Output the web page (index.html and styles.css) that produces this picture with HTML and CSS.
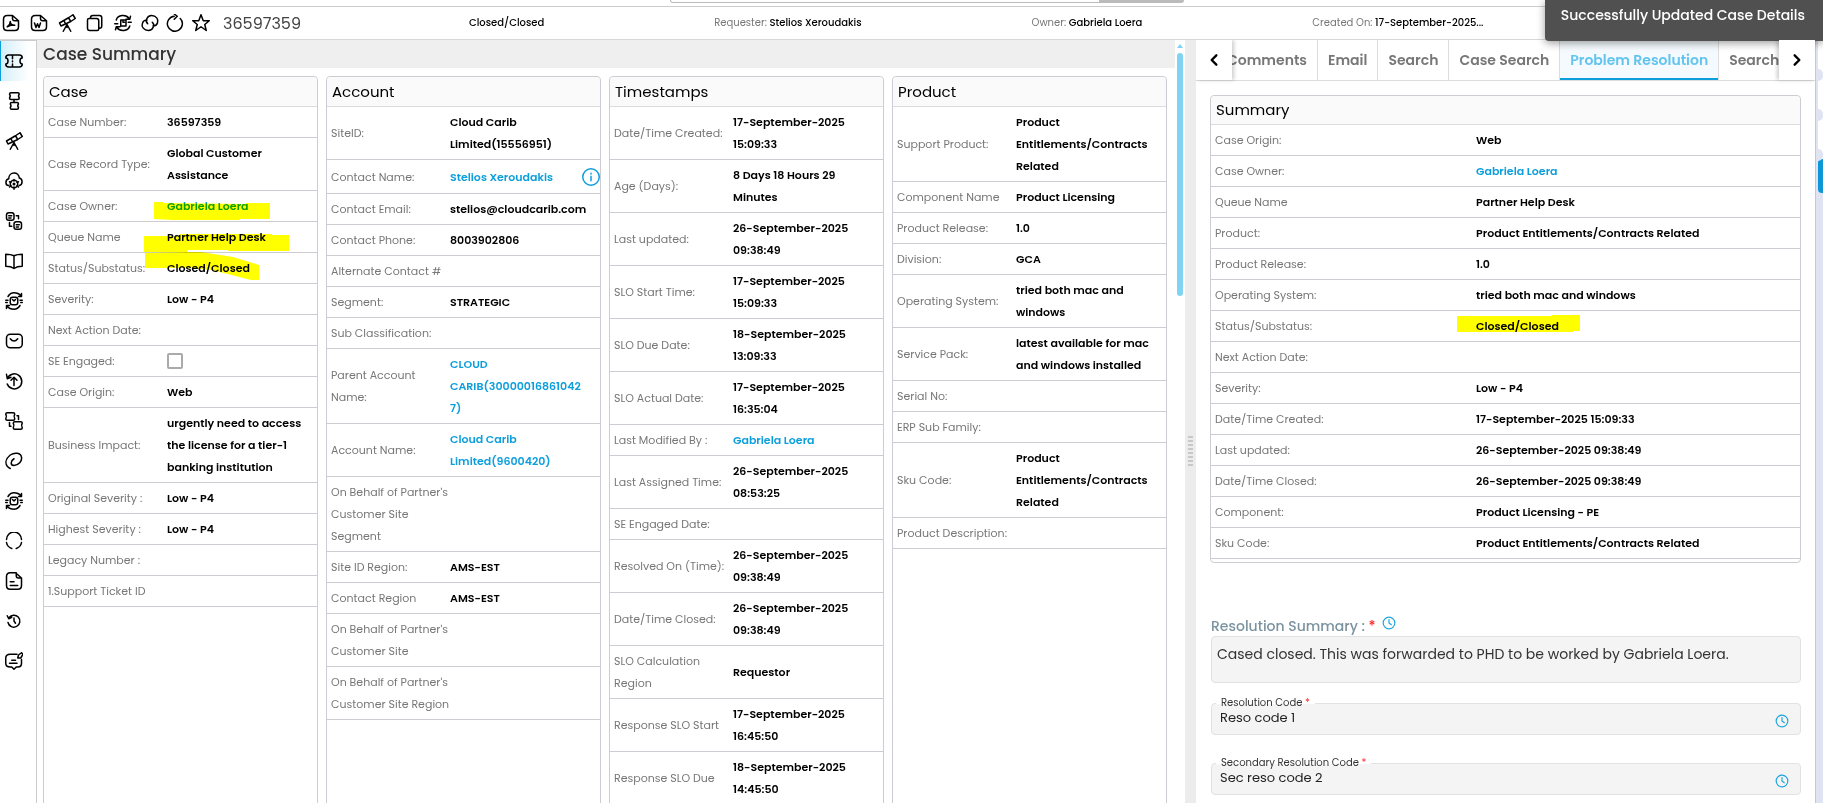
FILE: index.html
```
<!DOCTYPE html>
<html lang="en">
<head>
    <meta charset="UTF-8">
    <meta name="viewport" content="width=device-width, initial-scale=1.0">
    <title>Case 36597359</title>
    <link rel="stylesheet" href="styles.css">
</head>
<body>
    <!-- icon sprite -->
    <svg class="sprite" xmlns="http://www.w3.org/2000/svg">
        <symbol id="i-pdf" viewBox="0 0 24 24"><path d="M14 2H7Q2 2 2 7v10q0 5 5 5h10q5 0 5-5V9zM14 2v4q0 3 3 3h5M7 17q4-2 4-7 0 5 6 5-5-1-10 2"/></symbol>
        <symbol id="i-doc" viewBox="0 0 24 24"><path d="M14 2H7Q2 2 2 7v10q0 5 5 5h10q5 0 5-5V9zM14 2v4q0 3 3 3h5M6 12l2 6 2-5 2 5 2-6"/></symbol>
        <symbol id="i-scope" viewBox="0 0 24 24"><path d="M2 12l12-7 3 5-13 6zM14 5l6-4 3 5-6 4zM8 9l2 4M12 14l-5 9M12 14l5 9M12 14v4"/></symbol>
        <symbol id="i-copy" viewBox="0 0 24 24"><path d="M2 8q0-2 2-2h10q3 0 3 3v11q0 2-2 2H5q-3 0-3-3zM6 5q0-3 3-3h9q3 0 3 3v11q0 3-3 3"/></symbol>
        <symbol id="i-sync" viewBox="0 0 24 24"><path d="M3 8C5 1 16 0 20 6M22 3l-1 4-5 0M21 16C19 23 8 24 4 18M2 21l1-4h5M9 8h7v8H9zM12 8v3h2M1 13h4M19 11h4"/></symbol>
        <symbol id="i-link" viewBox="0 0 24 24"><path d="M9 13c-4-3-1-11 5-11s10 5 8 10c-1 3-4 4-6 4M15 11c4 3 1 11-5 11S0 17 2 12c1-3 4-4 6-4"/></symbol>
        <symbol id="i-reload" viewBox="0 0 24 24"><path d="M11 3a10 10 0 1 0 8 3M11 0l4 3-4 4"/></symbol>
        <symbol id="i-star" viewBox="0 0 24 24"><path d="M12 1l3 8h8l-6 5 2 8-7-5-7 5 2-8-6-5h8z"/></symbol>
        <symbol id="i-ticket" viewBox="0 0 24 24"><path d="M5 4h14q4 0 4 4-3 0-3 4t3 4q0 4-4 4H5q-4 0-4-4 3 0 3-4T1 8q0-4 4-4zM10 5v4M10 12v1M10 16v3"/></symbol>
        <symbol id="i-nodes" viewBox="0 0 24 24"><path d="M8 1h9q2 0 2 2-2 2 0 5 0 2-2 2H8q-2 0-2-2 2-3 0-5 0-2 2-2zM9 14h7q2 0 2 2-2 2 0 5 0 2-2 2H9q-2 0-2-2 2-3 0-5 0-2 2-2zM12 10v4"/></symbol>
        <symbol id="i-cloud" viewBox="0 0 24 24"><path d="M5 18c-5 0-5-8 0-9 0-10 14-10 14-1 5 1 5 9 0 10"/><circle cx="12" cy="16" r="5"/><circle cx="12" cy="16" r="1"/><path d="M12 10v2M12 20v3M6 13l2 1M6 20l2-2M18 13l-2 1M18 20l-2-2"/></symbol>
        <symbol id="i-tree" viewBox="0 0 24 24"><rect x="2" y="1" width="10" height="10" rx="3"/><rect x="12" y="13" width="10" height="10" rx="3"/><path d="M5 5h4M5 8h3M15 17h4M15 20h3M15 5h3v4M6 14v5h3"/></symbol>
        <symbol id="i-book" viewBox="0 0 24 24"><path d="M12 5Q8 3 1 3v16q7 0 11 3 4-3 11-3V3q-7 0-11 2zM12 5v16"/></symbol>
        <symbol id="i-mailsync" viewBox="0 0 24 24"><path d="M4 6Q7 1 12 1q6 0 9 4M22 2v4h-4M20 18q-3 5-8 5-6 0-9-4M2 22v-4h4"/><rect x="7" y="7" width="10" height="10" rx="3"/><path d="M10 10l2 2 2-2M1 11h3M1 14h2M20 11h3M21 14h2"/></symbol>
        <symbol id="i-mail" viewBox="0 0 24 24"><rect x="2" y="3" width="21" height="18" rx="5"/><path d="M7 9q5 6 10 0"/></symbol>
        <symbol id="i-upload" viewBox="0 0 24 24"><path d="M3 9a10 10 0 1 1 0 7M2 3l1 6 5-2M12 18V8M8 11l4-4 4 4"/></symbol>
        <symbol id="i-tickets" viewBox="0 0 24 24"><path d="M3 1h8q2 0 2 2-2 3 0 6 0 2-2 2H3q-2 0-2-2 2-3 0-6 0-2 2-2zM13 13h8q2 0 2 2-2 3 0 6 0 2-2 2h-8q-2 0-2-2 2-3 0-6 0-2 2-2zM16 5h2v5M6 14v5h2"/></symbol>
        <symbol id="i-clip" viewBox="0 0 24 24"><path d="M12 9c-5 3-5 9 0 9 6 0 11-6 10-11C21 1 13 0 7 4 1 9 0 15 3 19q2 2 4 3"/></symbol>
        <symbol id="i-circle" viewBox="0 0 24 24"><path d="M2 10a10 10 0 0 1 20 0M2 14q1 6 7 8M22 14q-1 6-7 8"/></symbol>
        <symbol id="i-note" viewBox="0 0 24 24"><path d="M14 1H7Q2 1 2 6v12q0 5 5 5h10q5 0 5-5V8zM15 1v4q0 3 3 3h4M7 13h5M7 18h10"/></symbol>
        <symbol id="i-history" viewBox="0 0 24 24"><path d="M5 8a8 8 0 1 1-1 6M3 5l2 4 4-2M12 8v4l2 3"/></symbol>
        <symbol id="i-edit" viewBox="0 0 24 24"><path d="M16 3H7Q1 3 1 8v7q0 5 6 5h2l3 3 3-3h2q5 0 5-5v-5M17 8l1-4 4-3 2 2-3 5zM9 11h5M6 15h10"/></symbol>
        <symbol id="i-clock" viewBox="0 0 24 24"><circle cx="12" cy="12" r="10"/><path d="M12 6v6l4 3"/></symbol>
        <symbol id="i-info" viewBox="0 0 24 24"><circle cx="12" cy="12" r="11"/><path d="M12 11v6M12 7v1"/></symbol>
        <symbol id="i-prev" viewBox="0 0 24 24"><path d="M16 4l-8 8 8 8"/></symbol>
        <symbol id="i-next" viewBox="0 0 24 24"><path d="M8 4l8 8-8 8"/></symbol>
    </svg>

    <div class="topbar"><div class="searchbox"><span></span></div></div>

    <header class="casebar">
        <div class="tools">
            <button aria-label="Export PDF"><svg><use href="#i-pdf"/></svg></button>
            <button aria-label="Export Word"><svg><use href="#i-doc"/></svg></button>
            <button aria-label="Explore"><svg><use href="#i-scope"/></svg></button>
            <button aria-label="Copy"><svg><use href="#i-copy"/></svg></button>
            <button aria-label="Sync"><svg><use href="#i-sync"/></svg></button>
            <button class="narrow" aria-label="Link"><svg><use href="#i-link"/></svg></button>
            <button class="narrow" aria-label="Reload"><svg><use href="#i-reload"/></svg></button>
            <button aria-label="Favourite"><svg><use href="#i-star"/></svg></button>
        </div>
        <span class="case-id">36597359</span>
        <div class="meta">
            <span><b>Closed/Closed</b></span>
            <span>Requester: <b>Stelios Xeroudakis</b></span>
            <span>Owner: <b>Gabriela Loera</b></span>
            <span>Created On: <b>17-September-2025...</b></span>
        </div>
    </header>

    <main class="workspace">
        <nav class="rail">
            <button class="active" aria-label="Case"><svg><use href="#i-ticket"/></svg></button>
            <button aria-label="Hierarchy"><svg><use href="#i-nodes"/></svg></button>
            <button aria-label="Explore"><svg><use href="#i-scope"/></svg></button>
            <button aria-label="Cloud"><svg><use href="#i-cloud"/></svg></button>
            <button aria-label="Related"><svg><use href="#i-tree"/></svg></button>
            <button aria-label="Knowledge"><svg><use href="#i-book"/></svg></button>
            <button aria-label="Mail sync"><svg><use href="#i-mailsync"/></svg></button>
            <button aria-label="Mail"><svg><use href="#i-mail"/></svg></button>
            <button aria-label="Escalate"><svg><use href="#i-upload"/></svg></button>
            <button aria-label="Linked cases"><svg><use href="#i-tickets"/></svg></button>
            <button aria-label="Attachments"><svg><use href="#i-clip"/></svg></button>
            <button aria-label="Transfers"><svg><use href="#i-mailsync"/></svg></button>
            <button aria-label="Progress"><svg><use href="#i-circle"/></svg></button>
            <button aria-label="Notes"><svg><use href="#i-note"/></svg></button>
            <button aria-label="History"><svg><use href="#i-history"/></svg></button>
            <button aria-label="Feedback"><svg><use href="#i-edit"/></svg></button>
        </nav>

        <section class="summary-pane">
            <h1>Case Summary</h1>
            <div class="cards">
                <section class="card">
                    <h2>Case</h2>
                    <dl>
                        <div><dt>Case Number:</dt><dd>36597359</dd></div>
                        <div><dt>Case Record Type:</dt><dd>Global Customer Assistance</dd></div>
                        <div><dt>Case Owner:</dt><dd><a href="#">Gabriela Loera</a></dd></div>
                        <div><dt>Queue Name</dt><dd>Partner Help Desk</dd></div>
                        <div><dt>Status/Substatus:</dt><dd>Closed/Closed</dd></div>
                        <div><dt>Severity:</dt><dd>Low - P4</dd></div>
                        <div><dt>Next Action Date:</dt><dd></dd></div>
                        <div><dt><label for="seEngaged">SE Engaged:</label></dt><dd><input type="checkbox" id="seEngaged"></dd></div>
                        <div><dt>Case Origin:</dt><dd>Web</dd></div>
                        <div><dt>Business Impact:</dt><dd>urgently need to access the license for a tier-1 banking institution</dd></div>
                        <div><dt>Original Severity :</dt><dd>Low - P4</dd></div>
                        <div><dt>Highest Severity :</dt><dd>Low - P4</dd></div>
                        <div><dt>Legacy Number :</dt><dd></dd></div>
                        <div><dt>1.Support Ticket ID</dt><dd></dd></div>
                    </dl>
                    <svg class="marker" width="273" height="220">
                        <path d="M110 125h9v1l83 1v-1h24v16h-30v1h-68l-18-1z"/>
                        <path d="M100 159h36v-2h92v1h17v16h-61v-1h-41v2h-43z"/>
                        <path d="M101 176l42-1h14l32 5 26 8v15h-8l-39-10-25-2h-42z"/>
                    </svg>
                </section>

                <section class="card">
                    <h2>Account</h2>
                    <dl>
                        <div><dt>SiteID:</dt><dd>Cloud Carib Limited(15556951)</dd></div>
                        <div class="with-info"><dt>Contact Name:</dt><dd><a href="#">Stelios Xeroudakis</a><button aria-label="Contact details"><svg><use href="#i-info"/></svg></button></dd></div>
                        <div><dt>Contact Email:</dt><dd>stelios@cloudcarib.com</dd></div>
                        <div><dt>Contact Phone:</dt><dd>8003902806</dd></div>
                        <div><dt>Alternate Contact #</dt><dd></dd></div>
                        <div><dt>Segment:</dt><dd>STRATEGIC</dd></div>
                        <div><dt>Sub Classification:</dt><dd></dd></div>
                        <div><dt>Parent Account Name:</dt><dd><a href="#">CLOUD CARIB(30000016861042<wbr>7)</a></dd></div>
                        <div><dt>Account Name:</dt><dd><a href="#">Cloud Carib Limited(9600420)</a></dd></div>
                        <div><dt>On Behalf of Partner's Customer Site<br>Segment</dt><dd></dd></div>
                        <div><dt>Site ID Region:</dt><dd>AMS-EST</dd></div>
                        <div><dt>Contact Region</dt><dd>AMS-EST</dd></div>
                        <div><dt>On Behalf of Partner's Customer Site</dt><dd></dd></div>
                        <div><dt>On Behalf of Partner's Customer Site Region</dt><dd></dd></div>
                    </dl>
                </section>

                <section class="card">
                    <h2>Timestamps</h2>
                    <dl>
                        <div><dt>Date/Time Created:</dt><dd>17-September-2025 15:09:33</dd></div>
                        <div><dt>Age (Days):</dt><dd>8 Days 18 Hours 29 Minutes</dd></div>
                        <div><dt>Last updated:</dt><dd>26-September-2025 09:38:49</dd></div>
                        <div><dt>SLO Start Time:</dt><dd>17-September-2025 15:09:33</dd></div>
                        <div><dt>SLO Due Date:</dt><dd>18-September-2025 13:09:33</dd></div>
                        <div><dt>SLO Actual Date:</dt><dd>17-September-2025 16:35:04</dd></div>
                        <div><dt>Last Modified By :</dt><dd><a href="#">Gabriela Loera</a></dd></div>
                        <div><dt>Last Assigned Time:</dt><dd>26-September-2025 08:53:25</dd></div>
                        <div><dt>SE Engaged Date:</dt><dd></dd></div>
                        <div><dt>Resolved On (Time):</dt><dd>26-September-2025 09:38:49</dd></div>
                        <div><dt>Date/Time Closed:</dt><dd>26-September-2025 09:38:49</dd></div>
                        <div><dt>SLO Calculation Region</dt><dd>Requestor</dd></div>
                        <div><dt>Response SLO Start</dt><dd>17-September-2025 16:45:50</dd></div>
                        <div><dt>Response SLO Due</dt><dd>18-September-2025 14:45:50</dd></div>
                    </dl>
                </section>

                <section class="card">
                    <h2>Product</h2>
                    <dl>
                        <div><dt>Support Product:</dt><dd>Product Entitlements/Contracts Related</dd></div>
                        <div><dt>Component Name</dt><dd>Product Licensing</dd></div>
                        <div><dt>Product Release:</dt><dd>1.0</dd></div>
                        <div><dt>Division:</dt><dd>GCA</dd></div>
                        <div><dt>Operating System:</dt><dd>tried both mac and windows</dd></div>
                        <div><dt>Service Pack:</dt><dd>latest available for mac and windows installed</dd></div>
                        <div><dt>Serial No:</dt><dd></dd></div>
                        <div><dt>ERP Sub Family:</dt><dd></dd></div>
                        <div><dt>Sku Code:</dt><dd>Product Entitlements/Contracts Related</dd></div>
                        <div><dt>Product Description:</dt><dd></dd></div>
                    </dl>
                </section>
            </div>
        </section>

        <div class="scrollbar"><i></i><span></span></div>
        <div class="splitter"><span></span></div>

        <section class="detail-pane">
            <div class="tabs">
                <button class="tab-arrow prev" aria-label="Previous tabs"><svg><use href="#i-prev"/></svg></button>
                <div class="tab-list">
                    <button class="tab clipped">Comments</button>
                    <button class="tab">Email</button>
                    <button class="tab">Search</button>
                    <button class="tab">Case Search</button>
                    <button class="tab active">Problem Resolution</button>
                    <button class="tab">Search</button>
                </div>
                <button class="tab-arrow next" aria-label="Next tabs"><svg><use href="#i-next"/></svg></button>
            </div>

            <div class="detail-body">
                <section class="card wide">
                    <h2>Summary</h2>
                    <dl>
                        <div><dt>Case Origin:</dt><dd>Web</dd></div>
                        <div><dt>Case Owner:</dt><dd><a href="#">Gabriela Loera</a></dd></div>
                        <div><dt>Queue Name</dt><dd>Partner Help Desk</dd></div>
                        <div><dt>Product:</dt><dd>Product Entitlements/Contracts Related</dd></div>
                        <div><dt>Product Release:</dt><dd>1.0</dd></div>
                        <div><dt>Operating System:</dt><dd>tried both mac and windows</dd></div>
                        <div><dt>Status/Substatus:</dt><dd>Closed/Closed<svg class="marker" width="123" height="17"><path d="M0 1h95V0h28v16h-7v1H0z"/></svg></dd></div>
                        <div><dt>Next Action Date:</dt><dd></dd></div>
                        <div><dt>Severity:</dt><dd>Low - P4</dd></div>
                        <div><dt>Date/Time Created:</dt><dd>17-September-2025 15:09:33</dd></div>
                        <div><dt>Last updated:</dt><dd>26-September-2025 09:38:49</dd></div>
                        <div><dt>Date/Time Closed:</dt><dd>26-September-2025 09:38:49</dd></div>
                        <div><dt>Component:</dt><dd>Product Licensing - PE</dd></div>
                        <div><dt>Sku Code:</dt><dd>Product Entitlements/Contracts Related</dd></div>
                    </dl>
                </section>

                <form class="resolution">
                    <div class="summary-label">
                        <label for="resSummary">Resolution Summary : <em>*</em></label>
                        <button type="button" aria-label="Summary history"><svg><use href="#i-clock"/></svg></button>
                    </div>
                    <textarea id="resSummary">Cased closed. This was forwarded to PHD to be worked by Gabriela Loera.</textarea>

                    <div class="field">
                        <label for="resCode">Resolution Code <em>*</em></label>
                        <input type="text" id="resCode" value="Reso code 1">
                        <button type="button" aria-label="Resolution code history"><svg><use href="#i-clock"/></svg></button>
                    </div>
                    <div class="field">
                        <label for="secCode">Secondary Resolution Code <em>*</em></label>
                        <input type="text" id="secCode" value="Sec reso code 2">
                        <button type="button" aria-label="Secondary code history"><svg><use href="#i-clock"/></svg></button>
                    </div>
                </form>
            </div>
        </section>

        <aside class="edge">
            <div><i></i><i></i><i></i></div>
            <button aria-label="Open panel"></button>
        </aside>
    </main>

    <div class="toast" role="status">Successfully Updated Case Details</div>
</body>
</html>
```
FILE: styles.css
```
* { box-sizing: border-box; }
body {
    margin: 0;
    height: 100vh;
    overflow: hidden;
    display: flex;
    flex-direction: column;
    font-family: Poppins, Inter, "Open Sans", sans-serif;
    font-size: 11px;
    color: #000;
    background: #fff;
}
button {
    font-family: inherit;
    background: none;
    border: none;
    padding: 0;
    cursor: pointer;
    display: flex;
    align-items: center;
    justify-content: center;
}
a { color: #0d9fdc; text-decoration: none; }
em { color: #f22; font-style: normal; }
svg { fill: none; stroke: currentColor; stroke-width: 2; stroke-linecap: round; stroke-linejoin: round; }
.sprite { display: none; }

/* top strip + case bar */
.topbar { height: 7px; flex: none; border-bottom: 1px solid #ccc; }
.searchbox {
    width: 514px; height: 3px; margin-left: 670px;
    border: 1px solid #bbb; border-top: none;
    border-radius: 0 0 4px 4px;
    display: flex; justify-content: flex-end;
}
.searchbox span { width: 84px; background: #bbb; }
.casebar {
    height: 33px; flex: none;
    display: flex; align-items: center;
    border-bottom: 1px solid #d8d8d8;
}
.tools { display: flex; gap: 8px; padding-left: 1px; }
.tools button { width: 20px; }
.tools .narrow { width: 17px; }
.tools svg { width: 20px; height: 18px; flex: none; }
.case-id { font-size: 16px; color: #444; margin-left: 12px; width: 78px; }
.meta { display: flex; gap: 170px; margin-left: 168px; font-size: 10px; color: #777; white-space: nowrap; }
.meta b { color: #000; font-weight: 500; }

/* layout */
.workspace { flex: 1; min-height: 0; display: flex; }
.rail { width: 37px; flex: none; border-right: 1px solid #ccc; border-top: 1px solid #ccc; }
.rail button { width: 28px; height: 40px; }
.rail svg { width: 18px; height: 18px; }
.rail .active {
    width: 100%; padding-right: 10px;
    border-left: 1px solid #0d9fdc;
    background: linear-gradient(to right, #d4effa, #fff 80%);
}
.summary-pane { flex: 1138; min-width: 0; overflow: hidden; display: flex; flex-direction: column; }
h1 {
    margin: 0; padding-left: 6px; flex: none;
    height: 28px; line-height: 29px;
    font-size: 17px; font-weight: 500; color: #333;
    background: #efefef;
}
.cards {
    flex: 1;
    display: grid; grid-template-columns: repeat(4, minmax(0, 1fr)); gap: 8px;
    padding: 8px 8px 0 6px;
}

/* cards */
.card { position: relative; border: 1px solid #ccccd2; border-radius: 4px 4px 0 0; }
h2 {
    margin: 0; padding-left: 5px;
    height: 30px; line-height: 30px;
    font-size: 15px; font-weight: 400;
    background: #fafafa; border-bottom: 1px solid #dcdcdf;
    border-radius: 4px 4px 0 0;
}
dl { margin: 0; }
dl > div {
    display: grid; grid-template-columns: 119px 1fr; align-items: center;
    min-height: 31px; padding: 4px 0 4px 4px;
    border-bottom: 1px solid #ccccd2;
    line-height: 22px;
}
dt { color: #777; }
dd { margin: 0; padding-right: 10px; font-weight: 600; position: relative; }
.with-info dd { display: flex; align-items: center; justify-content: space-between; padding-right: 0; }
.with-info button { height: 25px; color: #0d9fdc; }
.with-info svg { width: 18px; height: 18px; }
input[type="checkbox"] {
    appearance: none; display: block;
    width: 16px; height: 16px; margin: 0;
    border: 2px solid #aaa; border-radius: 2px; background: #fff;
}
.marker { position: absolute; left: 0; top: 0; fill: #ff0; stroke: none; mix-blend-mode: multiply; pointer-events: none; }
.wide { border-radius: 4px; padding-bottom: 3px; }
.wide h2 { padding-left: 5px; height: 29px; line-height: 28px; }
.wide dl > div { grid-template-columns: 261px 1fr; }
.wide .marker { left: -19px; }

/* scrollbar and splitter */
.scrollbar { width: 10px; flex: none; display: flex; flex-direction: column; align-items: center; gap: 5px; padding-top: 4px; }
.scrollbar i { border: 3px solid transparent; border-top: none; border-bottom: 4px solid #7fd3f3; }
.scrollbar span { width: 6px; height: 243px; border-radius: 3px; background: #7fd3f3; }
.splitter { width: 11px; flex: none; background: #ececec; display: flex; align-items: center; justify-content: center; }
.splitter span {
    width: 5px; height: 30px; margin-top: 58px;
    background: repeating-linear-gradient(to bottom, #c8c8c8 0 2px, #ececec 2px 4px);
}

/* right pane */
.detail-pane { flex: 619; min-width: 0; overflow: hidden; }
.tabs { height: 41px; display: flex; border-bottom: 1px solid #dcdcdc; }
.tab-arrow { width: 36px; flex: none; z-index: 1; background: #fff; }
.tab-arrow svg { width: 14px; height: 14px; stroke-width: 4; }
.prev { box-shadow: 2px 0 4px rgba(0,0,0,0.2); }
.next { box-shadow: -2px 0 4px rgba(0,0,0,0.2); }
.tab-list { flex: 1; min-width: 0; overflow: hidden; display: flex; }
.tab {
    flex: none; padding: 0 10px;
    font-size: 14px; font-weight: 600; color: #777;
    border-right: 1px solid #dcdcdc;
}
.tab.clipped { margin-left: -15px; }
.tab.active { color: #62c4ef; background: #f4fafe; box-shadow: inset 0 -2px #0d9fdc; }
.detail-body { padding: 14px 14px 0; }
.resolution { margin-top: 53px; padding-left: 1px; }
.summary-label { display: flex; align-items: center; gap: 6px; height: 20px; }
.summary-label label { font-size: 14px; font-weight: 500; color: #7b93a0; }
.summary-label button { margin-bottom: 6px; }
.resolution svg { width: 14px; height: 14px; color: #1ca5de; }
textarea {
    display: block; width: 100%; height: 47px;
    padding: 6px 5px; resize: none; overflow: hidden;
    font: 14px/22px Poppins, Inter, "Open Sans", sans-serif; color: #333;
    background: #f4f4f4; border: 1px solid #e2e2e2; border-radius: 4px;
}
.field {
    position: relative; height: 32px; margin-top: 20px;
    background: #f4f4f4; border: 1px solid #e2e2e2; border-radius: 4px;
}
.field + .field { margin-top: 28px; }
.field label {
    position: absolute; left: 4px; top: -8px;
    padding: 0 5px; font-size: 10px; line-height: 14px; color: #333;
    background: linear-gradient(#fff 60%, #f4f4f4 60%);
}
.field input {
    width: 100%; height: 28px; padding: 0 40px 0 8px;
    font-family: inherit; font-size: 13px; color: #222;
    border: none; background: none;
}
.field button { position: absolute; right: 11px; top: 10px; }

/* collapsed side panel */
.edge {
    width: 8px; flex: none; padding-left: 2px; overflow: hidden;
    border-left: 1px solid #c3c7da; background: #e0e3f1;
}
.edge div {
    height: 119px; padding-top: 29px;
    display: flex; flex-direction: column; gap: 28px;
    background: #fff;
}
.edge i { height: 12px; flex: none; border-radius: 0 6px 6px 0; background: #e0e3f1; }
.edge button { width: 100%; height: 34px; border-radius: 4px 0 0 4px; background: #0d97d8; }

.toast {
    position: absolute; right: 0; top: 0;
    height: 41px; padding: 5px 18px 0 16px;
    font-size: 14px; line-height: 20px; font-weight: 500; color: #fff;
    background: #505050; border-radius: 0 0 0 4px;
    box-shadow: 0 2px 8px rgba(0,0,0,0.4);
}
```
